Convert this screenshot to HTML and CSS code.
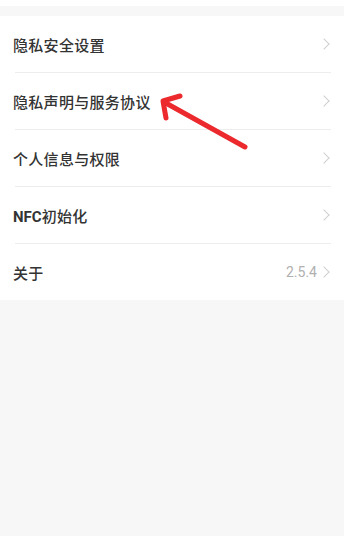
FILE: index.html
```html
<!DOCTYPE html>
<html lang="zh">
<head>
<meta charset="utf-8">
<link rel="stylesheet" href="styles.css">
</head>
<body>
<div class="topbar"></div>
<div class="card">
  <div class="row"><span class="label">隐私安全设置</span><span class="right"><span class="chev"></span></span></div>
  <div class="row"><span class="label">隐私声明与服务协议</span><span class="right"><span class="chev"></span></span></div>
  <div class="row"><span class="label">个人信息与权限</span><span class="right"><span class="chev"></span></span></div>
  <div class="row"><span class="label"><span class="latin">NFC</span>初始化</span><span class="right"><span class="chev"></span></span></div>
  <div class="row last"><span class="label">关于</span><span class="right"><span class="ver">2.5.4</span><span class="chev"></span></span></div>
</div>
<svg class="arrow" width="344" height="536" viewBox="0 0 344 536">
  <g stroke="#ec2a2e" stroke-width="5" stroke-linecap="round" stroke-linejoin="round" fill="none">
    <line x1="245" y1="147" x2="164" y2="102"/>
    <polyline points="180,96 163,101 166,118"/>
  </g>
</svg>
</body>
</html>
```
FILE: styles.css
```css
html, body {
  margin: 0;
  padding: 0;
}
body {
  width: 344px;
  height: 536px;
  background: #f7f7f7;
  font-family: "Noto Sans CJK SC", "Noto Sans", sans-serif;
  position: relative;
  overflow: hidden;
}
.topbar {
  height: 6px;
  background: #ffffff;
  margin-bottom: 10px;
}
.card {
  background: #ffffff;
  padding: 0 13px 0 13px;
}
.row {
  height: 56px;
  display: flex;
  align-items: center;
  justify-content: space-between;
  border-bottom: 1px solid #ededed;
  margin-left: 2px;
}
.row.last {
  border-bottom: none;
}
.label {
  font-size: 15px;
  font-weight: 500;
  letter-spacing: 0.3px;
  color: #333333;
  margin-left: -2px;
}
.latin {
  font-family: "Roboto", "Noto Sans", sans-serif;
  font-weight: 700;
  letter-spacing: 0;
}
.right {
  display: flex;
  align-items: center;
  gap: 3px;
}
.ver {
  font-size: 14px;
  color: #b0b0b0;
  font-family: "Roboto", "Noto Sans", sans-serif;
}
.chev {
  width: 7px;
  height: 7px;
  border-top: 1.3px solid #cfcfcf;
  border-right: 1.3px solid #cfcfcf;
  transform: rotate(45deg);
  margin-right: 3px;
}
.arrow {
  position: absolute;
  left: 0;
  top: 0;
  pointer-events: none;
}
```
